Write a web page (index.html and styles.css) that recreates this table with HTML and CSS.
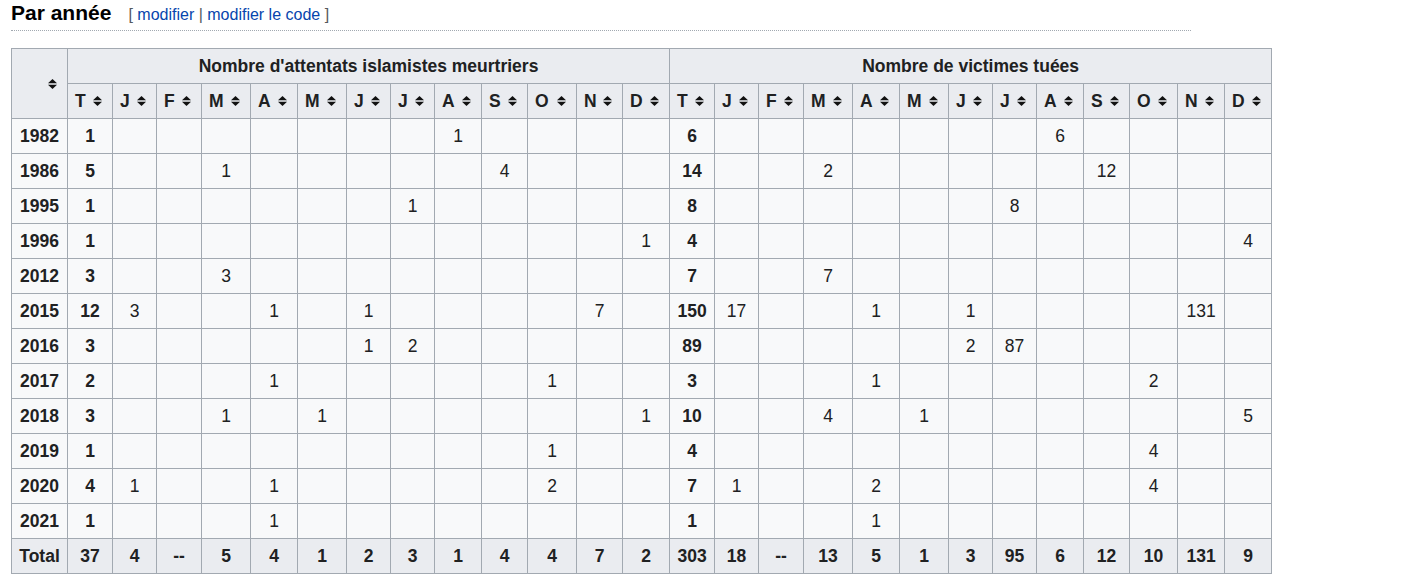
FILE: index.html
```html
<!DOCTYPE html>
<html lang="fr">
<head>
<meta charset="utf-8">
<title>Par année</title>
<link rel="stylesheet" href="styles.css">
</head>
<body>
<div class="page">
  <div class="heading">
    <span class="headline">Par année</span>
    <span class="editsection"><span class="br">[</span> <a href="#">modifier</a> <span class="sep">|</span> <a href="#">modifier le code</a> <span class="br">]</span></span>
  </div>

  <table class="wikitable">
    <colgroup>
      <col style="width:56px"><col style="width:45px"><col style="width:44px"><col style="width:45px"><col style="width:49px"><col style="width:47px"><col style="width:49px"><col style="width:44px"><col style="width:44px"><col style="width:47px"><col style="width:46px"><col style="width:49px"><col style="width:46px"><col style="width:47px"><col style="width:45px"><col style="width:44px"><col style="width:45px"><col style="width:49px"><col style="width:47px"><col style="width:49px"><col style="width:44px"><col style="width:44px"><col style="width:47px"><col style="width:46px"><col style="width:48px"><col style="width:47px"><col style="width:47px">
    </colgroup>
    <thead>
      <tr>
        <th rowspan="2" class="sort"><div class="hc"><span class="lbl"></span><svg class="si" width="9" height="10" viewBox="0 0 9 10"><polygon points="0,4.2 4.5,0 9,4.2"/><polygon points="0,5.8 4.5,10 9,5.8"/></svg></div></th>
        <th colspan="13">Nombre d'attentats islamistes meurtriers</th>
        <th colspan="13">Nombre de victimes tuées</th>
      </tr>
      <tr id="months"></tr>
    </thead>
    <tbody id="body"></tbody>
  </table>
</div>
<script src="script.js"></script>
</body>
</html>
```

FILE: script.js
```js
(function () {
  var months = ["T","J","F","M","A","M","J","J","A","S","O","N","D"];
  var icon = '<svg class="si" width="9" height="10" viewBox="0 0 9 10"><polygon points="0,4.2 4.5,0 9,4.2"/><polygon points="0,5.8 4.5,10 9,5.8"/></svg>';
  var mrow = document.getElementById("months");
  var html = "";
  for (var k = 0; k < 2; k++) {
    for (var i = 0; i < months.length; i++) {
      html += '<th class="sort"><div class="hc"><span class="lbl">' + months[i] + '</span>' + icon + '</div></th>';
    }
  }
  mrow.innerHTML = html;

  // year, attacks total, {month: n}, victims total, {month: n}  (month index 1..12)
  var data = [
    ["1982", 1, {8:1}, 6, {8:6}],
    ["1986", 5, {3:1, 9:4}, 14, {3:2, 9:12}],
    ["1995", 1, {7:1}, 8, {7:8}],
    ["1996", 1, {12:1}, 4, {12:4}],
    ["2012", 3, {3:3}, 7, {3:7}],
    ["2015", 12, {1:3, 4:1, 6:1, 11:7}, 150, {1:17, 4:1, 6:1, 11:131}],
    ["2016", 3, {6:1, 7:2}, 89, {6:2, 7:87}],
    ["2017", 2, {4:1, 10:1}, 3, {4:1, 10:2}],
    ["2018", 3, {3:1, 5:1, 12:1}, 10, {3:4, 5:1, 12:5}],
    ["2019", 1, {10:1}, 4, {10:4}],
    ["2020", 4, {1:1, 4:1, 10:2}, 7, {1:1, 4:2, 10:4}],
    ["2021", 1, {4:1}, 1, {4:1}]
  ];
  var out = "";
  data.forEach(function (r) {
    out += '<tr><th class="year">' + r[0] + '</th>';
    out += '<td class="tot">' + r[1] + '</td>';
    for (var m = 1; m <= 12; m++) out += '<td>' + (r[2][m] || "") + '</td>';
    out += '<td class="tot">' + r[3] + '</td>';
    for (var m2 = 1; m2 <= 12; m2++) out += '<td>' + (r[4][m2] || "") + '</td>';
    out += '</tr>';
  });
  var totals = ["Total","37","4","--","5","4","1","2","3","1","4","4","7","2","303","18","--","13","5","1","3","95","6","12","10","131","9"];
  out += '<tr class="total">';
  totals.forEach(function (t) { out += '<th>' + t + '</th>'; });
  out += '</tr>';
  document.getElementById("body").innerHTML = out;
})();
```

FILE: styles.css
```css
html, body {
  margin: 0;
  padding: 0;
  background: #ffffff;
}
body {
  font-family: "Liberation Sans", Arial, sans-serif;
  color: #202122;
}
.page {
  padding: 0 11px;
}
.heading {
  width: 1180px;
  height: 26px;
  display: flex;
  align-items: baseline;
  line-height: 26px;
  padding-bottom: 4px;
  border-bottom: 1px dotted #a2a9b1;
}
.headline {
  font-size: 21px;
  font-weight: bold;
  color: #000000;
}
.editsection {
  font-size: 16px;
  margin-left: 17px;
  color: #54595d;
}
.editsection a {
  color: #0645ad;
  text-decoration: none;
}
.editsection .sep {
  color: #54595d;
}
.wikitable {
  margin-top: 17px;
  width: 1261px;
  table-layout: fixed;
  border-collapse: collapse;
  background: #f8f9fa;
  color: #202122;
  font-size: 17.5px;
}
.wikitable th,
.wikitable td {
  border: 1px solid #a2a9b1;
  padding: 0;
  height: 34px;
  text-align: center;
  vertical-align: middle;
}
.wikitable thead th {
  background: #eaecf0;
  font-weight: bold;
}
.wikitable th.year {
  background: #f8f9fa;
  font-weight: bold;
}
.wikitable td.tot {
  font-weight: bold;
}
.wikitable tr.total th {
  background: #eaecf0;
  font-weight: bold;
}
.hc {
  display: flex;
  align-items: center;
  justify-content: space-between;
  padding: 0 10px 0 7px;
}
.lbl {
  line-height: 20px;
}
.si {
  display: block;
  fill: #111111;
  flex: none;
}
```
